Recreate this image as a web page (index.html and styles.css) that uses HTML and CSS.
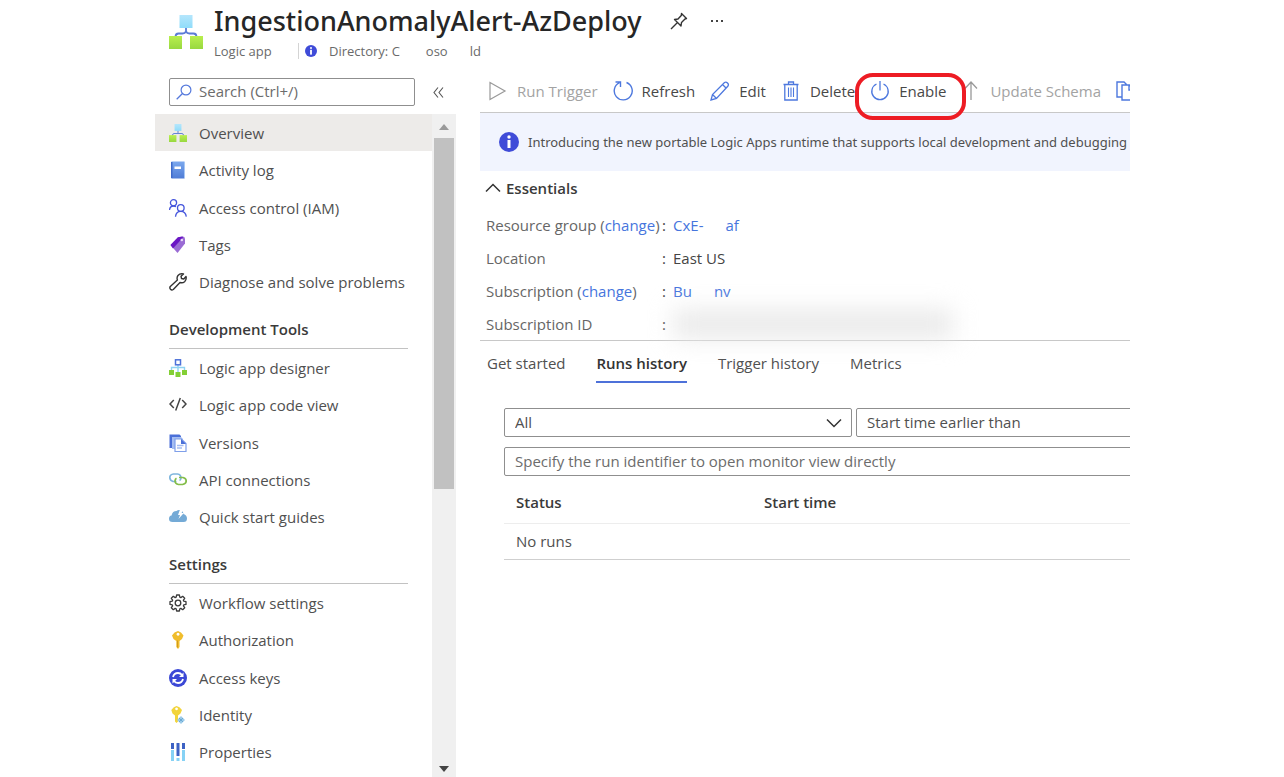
FILE: index.html
```html
<!DOCTYPE html>
<html lang="en">
<head>
<meta charset="utf-8">
<title>IngestionAnomalyAlert-AzDeploy</title>
<link rel="stylesheet" href="styles.css">
</head>
<body>
<div class="page">
  <header class="header">
    <svg class="header-icon" viewBox="0 0 34 34" aria-hidden="true">
      <defs>
        <linearGradient id="sky" x1="0" y1="0" x2="0" y2="1"><stop offset="0" stop-color="#b5e6fc"/><stop offset="1" stop-color="#8fdcfa"/></linearGradient>
        <linearGradient id="lime" x1="0" y1="0" x2="0" y2="1"><stop offset="0" stop-color="#b9ef4e"/><stop offset="1" stop-color="#98d840"/></linearGradient>
        <linearGradient id="book" x1="0" y1="0" x2="0" y2="1"><stop offset="0" stop-color="#7ba8ee"/><stop offset="1" stop-color="#4f7cd6"/></linearGradient>
      </defs>
      <path d="M17 12v4.500M17 16.500q-1 2-3.500 2h-4q-3 0-3 3.500M17 16.500q1 2 3.500 2h4q3 0 3 3.500" fill="none" stroke="#5b7bd5" stroke-width="1.800"/>
      <rect x="10.500" y="0" width="13" height="13" fill="url(#sky)"/>
      <rect x="0" y="21" width="13" height="13" fill="url(#lime)"/>
      <rect x="21" y="21" width="13" height="13" fill="url(#lime)"/>
    </svg>
    <div class="header-text">
      <div class="title-row">
        <h1>IngestionAnomalyAlert-AzDeploy</h1>
        <button class="icon-button" aria-label="Pin"><svg class="icon18" viewBox="0 0 18 18"><path d="M11.500 1.500l5 5-1.500.5-3.500 3.500-.5 3.500L4.500 7.500 8 7l3.300-3.500zM7.500 10.500L1 17" fill="none" stroke="#333" stroke-width="1.400" stroke-linejoin="round"/></svg></button>
        <button class="icon-button more" aria-label="More"><svg class="dots" viewBox="0 0 14 4"><g fill="#444"><rect x="1" y="1" width="2" height="2"/><rect x="6" y="1" width="2" height="2"/><rect x="11" y="1" width="2" height="2"/></g></svg></button>
      </div>
      <div class="sub-row">
        <span class="kind">Logic app</span>
        <svg class="info-small" viewBox="0 0 20 20"><circle cx="10" cy="10" r="10" fill="#3f4bd8"/><circle cx="10" cy="5" r="1.700" fill="#fff"/><rect x="8.500" y="8" width="3" height="8" fill="#fff"/></svg>
        <span>Directory: C</span><span class="dir-mid">oso</span><span class="dir-end">ld</span>
      </div>
    </div>
  </header>

  <div class="columns">
    <aside class="side">
      <div class="search-row">
        <label class="search">
          <svg class="icon16" viewBox="0 0 16 16"><circle cx="10" cy="6" r="4.900" fill="none" stroke="#5579dc" stroke-width="1.200"/><path d="M6.500 9.500L.7 15.300" stroke="#5579dc" stroke-width="1.300"/></svg>
          <input type="text" placeholder="Search (Ctrl+/)" aria-label="Search">
        </label>
        <button class="icon-button collapse" aria-label="Collapse menu"><svg class="icon-collapse" viewBox="0 0 11 11"><path d="M5 .5L1 5.500l4 5M10 .5L6 5.500l4 5" fill="none" stroke="#555" stroke-width="1.100"/></svg></button>
      </div>
      <div class="side-body">
        <nav class="nav">
          <ul class="nav-list">
            <li class="current"><a href="#"><svg class="icon18" viewBox="0 0 34 34"><path d="M17 12v5M6.500 22q0-4 3-4h15q3 0 3 4" fill="none" stroke="#5b7bd5" stroke-width="1.800"/><rect x="10.500" width="13" height="13" fill="url(#sky)"/><rect y="21" width="14" height="13" fill="url(#lime)"/><rect x="20" y="21" width="14" height="13" fill="url(#lime)"/></svg>Overview</a></li>
            <li><a href="#"><svg class="icon18" viewBox="0 0 18 18"><rect x="2" y=".5" width="14" height="17" rx="1" fill="url(#book)"/><path d="M2 1v16h1.500V1z" fill="#3f6bcb"/><rect x="5.500" y="5.500" width="6.500" height="2.500" fill="#fff"/><path d="M15.500 1v16" stroke="#a9c8f4"/></svg>Activity log</a></li>
            <li><a href="#"><svg class="icon18" viewBox="0 0 18 18"><g fill="none" stroke="#4555dc" stroke-width="1.300"><circle cx="4.500" cy="3.800" r="3.100"/><path d="M.5 11q.5-4 4-4 1.500 0 2.500.8"/><circle cx="11.800" cy="9" r="3.300"/><path d="M6.500 17.700q.5-5.400 5.300-5.400t5.500 5.400"/></g></svg>Access control (IAM)</a></li>
            <li><a href="#"><svg class="icon18" viewBox="0 0 18 18"><path d="M1.500 9L9 1.300 14 .5q2 .3 2 2.500v4.500L8.500 17z" fill="#9a6bd4"/><path d="M1.500 9L9 1.300l4.500-.8.5 1L4 12.500z" fill="#6a16c4"/><circle cx="12.800" cy="4" r="1.300" fill="#e9dcf8"/></svg>Tags</a></li>
            <li><a href="#"><svg class="icon18" viewBox="0 0 18 18"><path d="M12.500 5.500L12 3.200 14.500 1Q11 .2 9 2.500q-1.500 2-.6 4.500L1.300 13.500q-1 1.500.2 2.800 1.200 1.200 2.800.2L11 9.500q2.500.9 4.600-.8Q17.800 6.500 17 3.500L14.800 6z" fill="none" stroke="#333" stroke-width="1.400" stroke-linejoin="round"/></svg>Diagnose and solve problems</a></li>
          </ul>
          <h2>Development Tools</h2>
          <ul class="nav-list">
            <li><a href="#"><svg class="icon18" viewBox="0 0 18 18"><path d="M9 6v7M2.500 11V8.500h13V11" fill="none" stroke="#8fd3f2" stroke-width="1.400"/><rect x="6.500" y=".8" width="5" height="5" fill="#fff" stroke="#4d71d9" stroke-width="1.500"/><g fill="#83cf35"><rect y="11" width="5" height="5"/><rect x="6.500" y="13" width="5" height="5"/><rect x="13" y="11" width="5" height="5"/></g></svg>Logic app designer</a></li>
            <li><a href="#"><svg class="icon18" viewBox="0 0 18 18"><path d="M4.800 4L1 8l3.800 4M13.200 4L17 8l-3.800 4M11.300 2L6.700 14.500" fill="none" stroke="#444" stroke-width="1.500"/></svg>Logic app code view</a></li>
            <li><a href="#"><svg class="icon18" viewBox="0 0 18 18"><path d="M.5.500h10L12 2v12H.5z" fill="#4a6fd8"/><path d="M3 3h9l2 2v10H3z" fill="#a5bdf1"/><path d="M6 5h6.500L17 9.500v8H6z" fill="#fff" stroke="#7f9fe9" stroke-width="1.200"/><path d="M12 5v5h5z" fill="#4a6fd8"/><path d="M8 11.500h6.500M8 14h5" stroke="#a5bdf1" stroke-width="1.300"/></svg>Versions</a></li>
            <li><a href="#"><svg class="icon18" viewBox="0 0 18 18"><g fill="none" stroke-width="1.700"><path d="M7.500 10.500H4Q.8 9.500.8 6.500T4.500 3h4q3.500.5 3.500 4-.2 1.800-1.500 2.500" stroke="#7fb6dd"/><path d="M10 6.500h4q3.200.8 3.200 3.500T13.500 13.500h-4Q6 13 6 9.800 6.200 8 7.500 7.300" stroke="#83bd49"/></g></svg>API connections</a></li>
            <li><a href="#"><svg class="icon18" viewBox="0 0 18 18"><path d="M3.500 14Q0 14 0 10.700 0 7.800 2.500 7.400 3.500 3 7.500 3 9 1.500 11 2q3 .5 3.500 4 3.500 1 3.500 4.500 0 3.500-3.500 3.500z" fill="#74aad6"/><path d="M11 1.500h3.500l-2 3.500h2.300L9.500 11l1.500-4H9z" fill="#fff"/></svg>Quick start guides</a></li>
          </ul>
          <h2>Settings</h2>
          <ul class="nav-list">
            <li><a href="#"><svg class="icon18" viewBox="0 0 18 18"><g fill="none" stroke="#3a3a3a" stroke-width="1.300" stroke-linejoin="round"><path d="M7.600 1h2.800l.4 2.200 1 .4L13.700 2.300l2 2-1.300 1.900.4 1L17 7.600v2.800l-2.200.4-.4 1 1.300 1.900-2 2-1.900-1.300-1 .4-.4 2.200H7.600l-.4-2.200-1-.4-1.900 1.300-2-2 1.300-1.900-.4-1L1 10.400V7.600l2.200-.4.4-1L2.300 4.300l2-2 1.900 1.300 1-.4z"/><circle cx="9" cy="9" r="2.800"/></g></svg>Workflow settings</a></li>
            <li><a href="#"><svg class="icon18" viewBox="0 0 18 18"><path fill-rule="evenodd" d="M9 0l3 1.500L14.500 4.500 13 8l-2.500 2v6L9 18l-1.700-2v-6L4.500 8 3 4.500 5.500 1.500zM9 1.700a1.500 1.500 0 1 0 .1 0z" fill="#f0bd2c"/><path d="M8.500 9.500v7" stroke="#d29a1d"/></svg>Authorization</a></li>
            <li><a href="#"><svg class="icon18" viewBox="0 0 18 18"><circle cx="9" cy="9" r="9" fill="#3b48d6"/><path d="M4 8q1-4 5-4 2.500 0 4 2M14 10q-1 4-5 4-2.500 0-4-2" fill="none" stroke="#fff" stroke-width="1.800"/><path d="M14.500 3.500V8H10zM3.500 14.500V10H8z" fill="#fff"/></svg>Access keys</a></li>
            <li><a href="#"><svg class="icon18" viewBox="0 0 18 18"><path fill-rule="evenodd" d="M7.500 0l3 1.200L13 4l-1.500 3.500L9 9.500v6L7.500 17 6 15.500v-6L3.500 7.500 2.300 4l2.500-2.800zM7.500 1.500a1.400 1.400 0 1 0 .1 0z" fill="#f2d43c"/><path d="M12 10l4 4-4 4-4-4z" fill="#9ccbe9"/><path d="M10 12l4 4M14 12l-4 4" stroke="#5d9fce" stroke-width=".8"/></svg>Identity</a></li>
            <li><a href="#"><svg class="icon18" viewBox="0 0 18 18"><path d="M3.500 0v6M9 0v13M14.500 0v6" stroke="#3d62c4" stroke-width="3"/><path d="M3.500 7v11M9 15v3M14.500 7v11" stroke="#86d2f5" stroke-width="3"/></svg>Properties</a></li>
          </ul>
        </nav>
        <div class="scrollbar" aria-hidden="true">
          <svg class="arrow" viewBox="0 0 10 6"><path d="M0 6l5-6 5 6z" fill="#9a9a9a"/></svg>
          <div class="thumb"></div>
          <svg class="arrow arrow-down" viewBox="0 0 10 6"><path d="M0 0l5 6 5-6z" fill="#444"/></svg>
        </div>
      </div>
    </aside>

    <main class="main">
      <div class="commands">
        <button class="command" disabled><svg class="icon20" viewBox="0 0 20 20"><path d="M2 1.500v17L17 10z" fill="none" stroke="#999" stroke-width="1.200"/></svg>Run Trigger</button>
        <button class="command"><svg class="icon20" viewBox="0 0 20 20"><path d="M13.500 1.500A9 9 0 1 1 6.500 1.700M2.500 1h5v5" fill="none" stroke="#4d78de" stroke-width="1.400"/></svg>Refresh</button>
        <button class="command"><svg class="icon20" viewBox="0 0 20 20"><path d="M1 19l1.500-5.500L14.500 1.500q1.500-1 3 .5t.5 3L6.500 17.500zM12.500 3.500l4 4M2.500 13.500l4 4" fill="none" stroke="#4d78de" stroke-width="1.300"/></svg>Edit</button>
        <button class="command"><svg class="icon20" viewBox="0 0 20 20"><path d="M2.500 3.500h15M3.800 3.500V19h12.400V3.500M7.500 3.500V1h5v2.500" fill="none" stroke="#4d78de" stroke-width="1.300"/><path d="M7.500 6.500v9.500M10 6.500v9.500M12.500 6.500v9.500" stroke="#4d78de" stroke-width="1.100"/></svg>Delete</button>
        <button class="command enable"><svg class="icon20" viewBox="0 0 20 20"><path d="M6.500 3A8.200 8.200 0 1 0 13.500 3M10 0v9.500" fill="none" stroke="#4d78de" stroke-width="1.300"/></svg>Enable</button>
        <button class="command" disabled><svg class="icon20" viewBox="0 0 20 20"><path d="M10 1v18M4 7.500L10 1l6 6.500" fill="none" stroke="#999" stroke-width="1.300"/></svg>Update Schema</button>
        <button class="command" aria-label="Clone"><svg class="icon20" viewBox="0 0 20 20"><path d="M6 16H1V1h7l2.500 2.500M6 4h7.500L18 8.500V19H6zM13 4v5h5" fill="none" stroke="#4d78de" stroke-width="1.400"/></svg></button>
      </div>
      <div class="banner">
        <svg class="icon20" viewBox="0 0 20 20"><circle cx="10" cy="10" r="10" fill="#3f4bd8"/><circle cx="10" cy="5" r="1.700" fill="#fff"/><rect x="8.500" y="8" width="3" height="8" fill="#fff"/></svg>
        <span>Introducing the new portable Logic Apps runtime that supports local development and debugging</span>
      </div>
      <button class="essentials-toggle"><svg class="chev" viewBox="0 0 16 10"><path d="M1 8.500L8 1.500l7 7" fill="none" stroke="#333" stroke-width="1.500"/></svg>Essentials</button>
      <dl class="essentials">
        <dt>Resource group (<a href="#">change</a>)</dt><dd>:</dd><dd><a href="#">CxE-</a><a class="group-end" href="#">af</a></dd>
        <dt>Location</dt><dd>:</dd><dd>East US</dd>
        <dt>Subscription (<a href="#">change</a>)</dt><dd>:</dd><dd><a href="#">Bu</a><a class="sub-end" href="#">nv</a></dd>
        <dt>Subscription ID</dt><dd>:</dd><dd><div class="smudge"></div></dd>
      </dl>
      <div class="tabs" role="tablist">
        <button role="tab">Get started</button>
        <button role="tab" class="active" aria-selected="true">Runs history</button>
        <button role="tab">Trigger history</button>
        <button role="tab">Metrics</button>
      </div>
      <div class="runs">
        <div class="filters">
          <div class="select-wrap">
            <select aria-label="Status filter"><option>All</option></select>
            <svg class="chev" viewBox="0 0 16 10"><path d="M1 1.500l7 7 7-7" fill="none" stroke="#333" stroke-width="1.500"/></svg>
          </div>
          <input class="field start" type="text" value="Start time earlier than" aria-label="Start time filter">
        </div>
        <input class="field" type="text" placeholder="Specify the run identifier to open monitor view directly" aria-label="Run identifier">
        <table>
          <thead><tr><th>Status</th><th>Start time</th></tr></thead>
          <tbody><tr><td colspan="2">No runs</td></tr></tbody>
        </table>
      </div>
    </main>
  </div>
</div>
</body>
</html>
```
FILE: styles.css
```css
* { box-sizing: border-box; }
body {
  margin: 0;
  background: #fff;
  color: #505050;
  font: 15px/20px "Open Sans", "Noto Sans", sans-serif;
}
button, input, select { font: inherit; color: inherit; margin: 0; }
button { background: none; border: 0; padding: 0; white-space: nowrap; }
a { color: #4675dd; text-decoration: none; }
svg { display: block; flex: none; }
.icon16 { width: 16px; height: 16px; }
.icon18 { width: 18px; height: 18px; }
.icon20 { width: 20px; height: 20px; }
.chev { width: 16px; height: 10px; }

.page {
  display: flex;
  flex-direction: column;
  min-height: 100vh;
  padding: 0 154px 0 155px;
}

/* Header */
.header { display: flex; height: 78px; padding-left: 14px; gap: 11px; }
.header-icon { width: 34px; height: 34px; margin-top: 15px; }
.title-row { display: flex; align-items: center; height: 42px; }
h1 { margin: 0; font-family: "Noto Sans", "Open Sans", sans-serif; font-size: 27px; line-height: 42px; font-weight: 500; color: #262626; white-space: nowrap; }
.icon-button { display: flex; align-items: center; }
.title-row .icon-button { margin-left: 28px; }
.title-row .more { margin-left: 22px; }
.dots { width: 14px; height: 4px; }
.sub-row { display: flex; align-items: center; height: 18px; font-size: 13px; color: #6a6a6a; }
.kind { width: 85px; border-right: 1px solid #d4d4d4; line-height: 16px; }
.info-small { width: 12px; height: 12px; margin: 0 12px 0 6px; }
.dir-mid { margin-left: 26px; }
.dir-end { margin-left: 22px; }

.columns { display: flex; flex: 1; gap: 24px; }

/* Sidebar */
.side { flex: none; width: 301px; display: flex; flex-direction: column; }
.search-row { display: flex; align-items: center; height: 36px; padding: 0 12px 8px 14px; }
.search {
  display: flex; align-items: center; gap: 7px; flex: none;
  width: 246px; height: 28px; padding: 0 6px;
  border: 1px solid #8f8f8f; border-radius: 2px;
}
.search input { flex: 1; min-width: 0; border: 0; padding: 0 0 2px; outline: 0; background: none; }
input::placeholder { color: #6c6c6c; opacity: 1; }
.collapse { margin-left: 18px; }
.icon-collapse { width: 11px; height: 11px; }
.side-body { display: flex; flex: 1; }
.nav { flex: 1; }
.nav-list { display: flex; flex-direction: column; list-style: none; margin: 0; padding: 0; min-height: 187px; }
.nav-list li { display: flex; flex: 1; }
.nav-list a { display: flex; flex: 1; align-items: center; gap: 12px; padding: 0 14px; color: #505050; white-space: nowrap; }
.nav-list .current { background: #edebe9; }
.nav h2 {
  margin: 0 24px 0 14px; height: 48px; padding-top: 18px;
  border-bottom: 1px solid #c2c2c2;
  font-size: 15px; line-height: 20px; font-weight: 600; color: #3a3a3a;
}
.scrollbar {
  display: flex; flex-direction: column; align-items: center;
  width: 24px; background: #f0f0f0; padding: 10px 0 5px;
}
.arrow { width: 10px; height: 6px; }
.thumb { width: 20px; height: 351px; margin-top: 8px; background: #c1c1c1; }
.arrow-down { margin-top: auto; }

/* Main panel */
.main { flex: 1; min-width: 0; overflow-x: clip; }
.commands { display: flex; gap: 15px; height: 35px; padding: 0 0 8px 8px; border-bottom: 1px solid #c8c8c8; }
.command { display: flex; flex: none; align-items: center; gap: 9px; height: 26px; color: #484848; }
.command:disabled { color: #a3a3a3; }
.enable { position: relative; }
.enable::after {
  content: ""; position: absolute; inset: -5px -20px -16px -15px;
  border: 4px solid #ed1c24; border-radius: 18px; z-index: 1;
}
.banner {
  display: flex; align-items: center; gap: 9px;
  height: 58px; padding-left: 19px;
  background: #f1f4fe; font-family: "Noto Sans", "Open Sans", sans-serif; font-size: 13px; white-space: nowrap;
}
.essentials-toggle { display: flex; align-items: center; gap: 5px; height: 34px; padding-left: 5px; font-weight: 600; color: #3a3a3a; }
.essentials {
  display: grid; grid-template-columns: 176px 11px 1fr; grid-auto-rows: 33px; align-items: center;
  margin: 0; padding: 3px 0 0 6px; height: 136px; border-bottom: 1px solid #c8c8c8; color: #666;
  white-space: nowrap;
}
.essentials dd { margin: 0; color: #444; }
.group-end { margin-left: 22px; }
.sub-end { margin-left: 22px; }
.smudge { width: 280px; height: 28px; background: #e9e9e9; filter: blur(12px); }

.tabs { display: flex; gap: 31px; padding-left: 7px; height: 42px; }
.tabs button { height: 42px; padding-top: 4px; border-bottom: 2px solid transparent; }
.tabs .active { border-color: #4d71d9; font-weight: 600; color: #333; }

.runs { padding: 25px 0 0 24px; }
.filters { display: flex; gap: 4px; margin-bottom: 10px; }
.select-wrap { position: relative; flex: none; width: 348px; }
.select-wrap .chev { position: absolute; right: 10px; top: 10px; pointer-events: none; }
.select-wrap select, .field {
  display: block; width: 720px; height: 29px; padding: 0 10px 1px;
  border: 1px solid #8f8f8f; border-radius: 2px; background: #fff;
}
.select-wrap select { width: 100%; appearance: none; }
.field.start { flex: none; width: 348px; }
table { width: 720px; border-collapse: collapse; text-align: left; }
th { padding: 16px 12px 11px; font-weight: 600; color: #3a3a3a; border-bottom: 1px solid #ededed; }
th:first-child { width: 248px; }
td { padding: 7px 12px 8px; border-bottom: 1px solid #cfcfcf; }
```
